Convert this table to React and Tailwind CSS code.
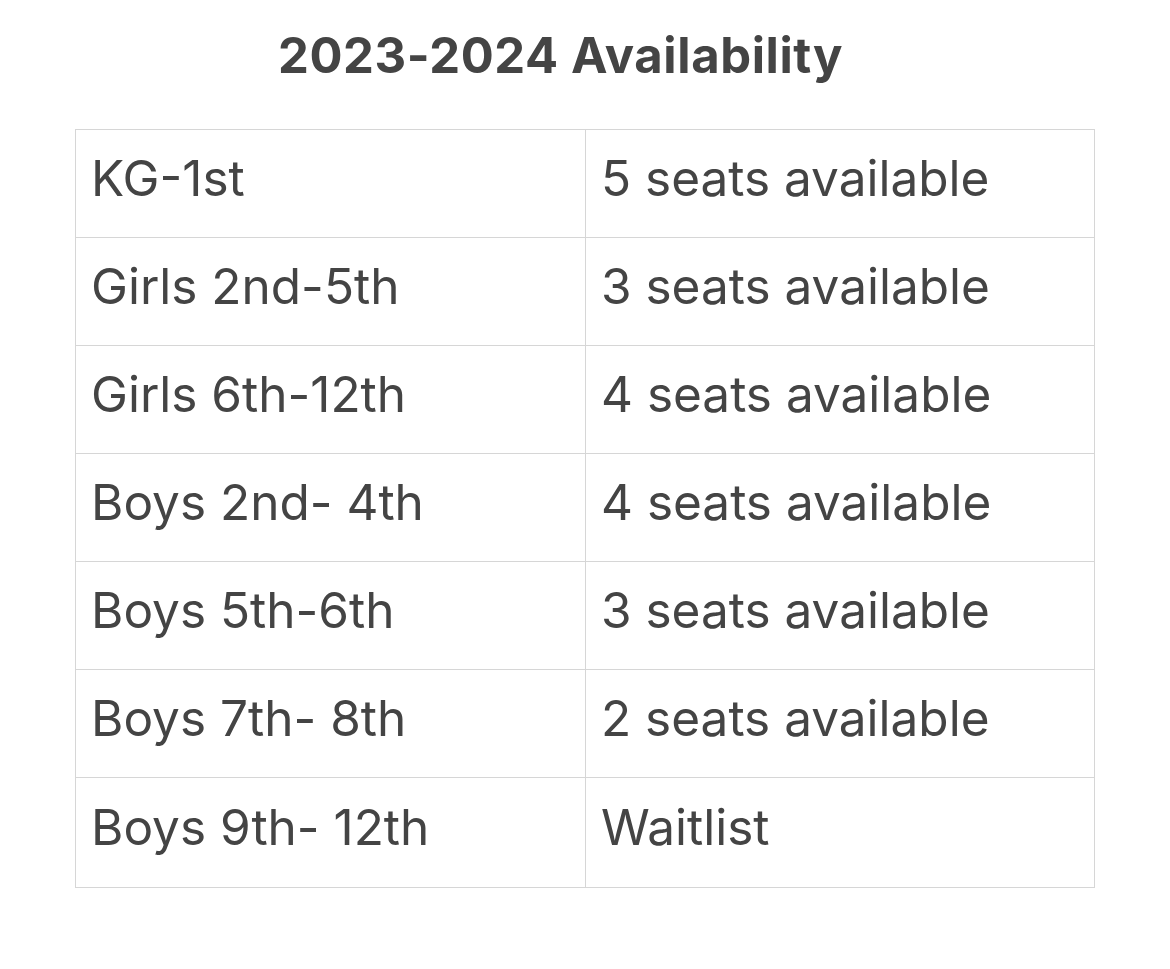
const rows = [
  ["KG-1st", "5 seats available"],
  ["Girls 2nd-5th", "3 seats available"],
  ["Girls 6th-12th", "4 seats available"],
  ["Boys 2nd- 4th", "4 seats available"],
  ["Boys 5th-6th", "3 seats available"],
  ["Boys 7th- 8th", "2 seats available"],
  ["Boys 9th- 12th", "Waitlist"],
]

export default function App() {
  return (
    <div className="min-h-[969px] w-[1170px] bg-white text-[#444444] font-['Inter',sans-serif]">
      <h1 className="pt-[22px] pr-[49px] text-center text-[49px] font-bold leading-[68px] tracking-[0.6px]">
        2023-2024 Availability
      </h1>
      <table className="mt-[39px] ml-[75px] w-[1020px] border-collapse table-fixed">
        <tbody>
          {rows.map(([grade, seats], i) => (
            <tr key={i} className={i === rows.length - 1 ? "h-[110px]" : "h-[108px]"}>
              <td className="w-[510px] border border-[#d6d6d6] pl-[15px] pb-[10px] align-middle text-[49.5px]">
                {grade}
              </td>
              <td className="border border-[#d6d6d6] pl-[15px] pb-[10px] align-middle text-[49.5px]">
                {seats}
              </td>
            </tr>
          ))}
        </tbody>
      </table>
    </div>
  )
}
